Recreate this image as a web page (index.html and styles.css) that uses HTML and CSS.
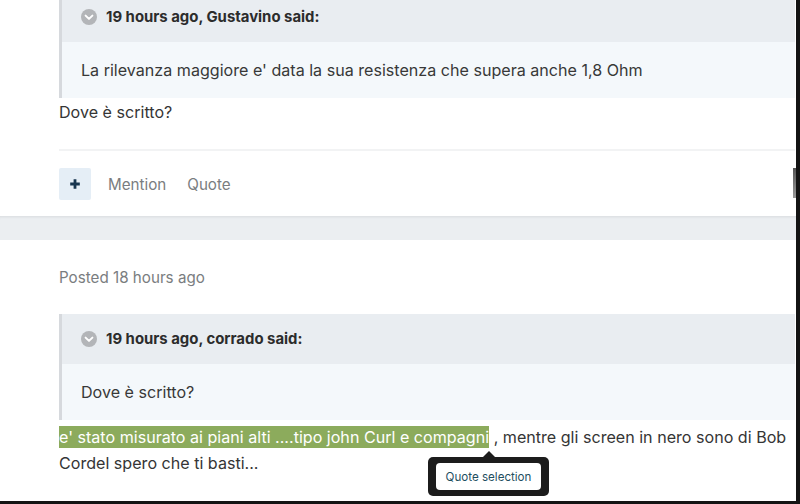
FILE: index.html
```html
<!DOCTYPE html>
<html lang="it">
<head>
<meta charset="utf-8">
<title>Forum</title>
<link rel="stylesheet" href="styles.css">
</head>
<body>
<div class="frame">
  <article class="post post-first">
    <blockquote class="quote">
      <div class="quote-head">
        <svg class="chev" viewBox="0 0 16 16" width="16" height="16"><circle cx="8" cy="8" r="8" fill="#b3b5b8"/><path d="M4.6 6.6 8 9.9 11.4 6.6" fill="none" stroke="#fff" stroke-width="2" stroke-linecap="round" stroke-linejoin="round"/></svg>
        <span>19 hours ago, Gustavino said:</span>
      </div>
      <div class="quote-body">La rilevanza maggiore e' data la sua resistenza che supera anche 1,8 Ohm</div>
    </blockquote>
    <p class="text">Dove è scritto?</p>
    <div class="actions">
      <button class="plus" type="button"><svg viewBox="0 0 12 12" width="12" height="12"><path d="M6 1.2v9.6M1.2 6h9.6" stroke="#17354f" stroke-width="2.8"/></svg></button>
      <span class="act">Mention</span>
      <span class="act">Quote</span>
    </div>
    <span class="edge-mark"></span>
  </article>
  <div class="gap"></div>
  <article class="post post-second">
    <div class="meta">Posted 18 hours ago</div>
    <blockquote class="quote">
      <div class="quote-head">
        <svg class="chev" viewBox="0 0 16 16" width="16" height="16"><circle cx="8" cy="8" r="8" fill="#b3b5b8"/><path d="M4.6 6.6 8 9.9 11.4 6.6" fill="none" stroke="#fff" stroke-width="2" stroke-linecap="round" stroke-linejoin="round"/></svg>
        <span>19 hours ago, corrado said:</span>
      </div>
      <div class="quote-body">Dove è scritto?</div>
    </blockquote>
    <p class="text reply"><span class="sel">e' stato misurato ai piani alti ....tipo john Curl e compagni</span> , mentre gli screen in nero sono di Bob Cordel spero che ti basti...</p>
    <div class="tooltip">
      <span class="tip-arrow"></span>
      <button class="tip-btn" type="button">Quote selection</button>
    </div>
  </article>
</div>
</body>
</html>
```
FILE: styles.css
```css
* { box-sizing: border-box; }
html, body { margin: 0; padding: 0; background: #fff; }
body {
  font-family: Inter, "Noto Sans", sans-serif;
  color: #353535;
  width: 800px;
  height: 504px;
  overflow: hidden;
}
.frame {
  width: 800px;
  height: 504px;
  border-right: 4px solid #141414;
  border-bottom: 3px solid #141414;
  overflow: hidden;
  background: #fff;
}
.post {
  position: relative;
  padding-left: 59px;
  padding-right: 1px;
  background: #fff;
}
.post-first { margin-top: -8px; padding-bottom: 16px; }
.quote {
  margin: 0;
  border-left: 3px solid #d6d9dd;
}
.quote-head {
  height: 50px;
  background: #e9edf1;
  display: flex;
  align-items: center;
  gap: 9px;
  padding-left: 19px;
  font-weight: 700;
  font-size: 14.9px;
  color: #2c2c2c;
}
.chev { flex: none; }
.quote-body {
  height: 56px;
  background: #f4f8fb;
  display: flex;
  align-items: center;
  padding-left: 19px;
  font-size: 16.1px;
  color: #383838;
}
.text {
  margin: 0;
  font-size: 16.1px;
  line-height: 27px;
  padding-top: 1px;
}
.post-first .text { height: 53px; border-bottom: 2px solid #f2f3f4; margin-bottom: 17px; }
.actions {
  display: flex;
  align-items: center;
  height: 32px;
}
.plus {
  width: 32px;
  height: 32px;
  border: 0;
  padding: 0;
  border-radius: 2px;
  background: #e5eef6;
  display: flex;
  align-items: center;
  justify-content: center;
  margin-right: 17px;
}
.act {
  font-size: 15.2px;
  color: #7a7d80;
  margin-right: 21px;
}
.edge-mark {
  position: absolute;
  right: 0;
  top: 176px;
  width: 3px;
  height: 30px;
  background: linear-gradient(#555, #999);
}
.gap {
  height: 24px;
  background: #ebeef1;
  box-shadow: inset 0 3px 3px -2px rgba(0,0,0,0.08);
}
.post-second { padding-top: 27px; }
.meta {
  font-size: 15.2px;
  color: #7a7d80;
  height: 22px;
  line-height: 22px;
  margin-bottom: 25px;
}
.reply {
  padding-top: 4px;
  padding-right: 4px;
  line-height: 26px;
}
.sel {
  background: #8cab5c;
  color: #fff;
  padding: 1px 0;
}
.tooltip {
  position: absolute;
  left: 428px;
  top: 217px;
  width: 121px;
  height: 39px;
  background: #1c1c1c;
  border-radius: 5px;
  padding: 6px 8px;
}
.tip-arrow {
  position: absolute;
  left: 55px;
  top: -6px;
  border-left: 6px solid transparent;
  border-right: 6px solid transparent;
  border-bottom: 6px solid #1c1c1c;
}
.tip-btn {
  width: 105px;
  height: 27px;
  border: 0;
  border-radius: 4px;
  background: #fff;
  font-family: Inter, "Noto Sans", sans-serif;
  font-size: 11.6px;
  color: #1f4f5f;
  padding: 0;
}
```
